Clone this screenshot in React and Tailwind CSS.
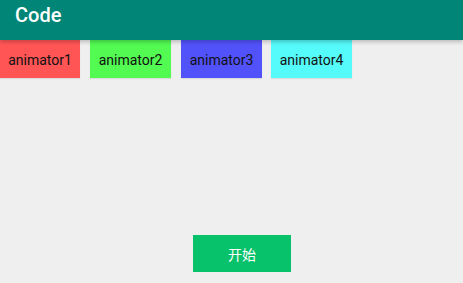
export default function App() {
  const btns = [
    { t: "animator1", c: "bg-[#ff5555]", w: "w-[80px]", ml: "ml-0" },
    { t: "animator2", c: "bg-[#52fa52]", w: "w-[81px]", ml: "ml-[10px]" },
    { t: "animator3", c: "bg-[#5252fa]", w: "w-[81px]", ml: "ml-[10px]" },
    { t: "animator4", c: "bg-[#55fafa]", w: "w-[81px]", ml: "ml-[9px]" },
  ];
  return (
    <div className="w-[463px] h-[283px] bg-[#efefef] overflow-hidden flex flex-col" style={{ fontFamily: "Roboto, 'Noto Sans CJK SC', sans-serif" }}>
      <div className="h-[40px] bg-[#008577] flex items-center pl-[15px] relative z-10 shadow-[0_2px_4px_rgba(0,0,0,0.22)] shrink-0">
        <span className="text-white text-[20px] font-medium leading-none -mt-[11px]">Code</span>
      </div>
      <div className="flex h-[38px] shrink-0">
        {btns.map((b) => (
          <div key={b.t} className={`${b.c} ${b.w} ${b.ml} flex items-center justify-center pt-[3px] text-[14px] text-[#111] shadow-[0_1px_1px_rgba(0,0,0,0.08)]`}>
            {b.t}
          </div>
        ))}
      </div>
      <div className="ml-[193px] mt-[157px] w-[98px] h-[37px] bg-[#07c16b] flex items-center justify-center pt-[3px] text-white text-[14px]">
        开始
      </div>
    </div>
  );
}
